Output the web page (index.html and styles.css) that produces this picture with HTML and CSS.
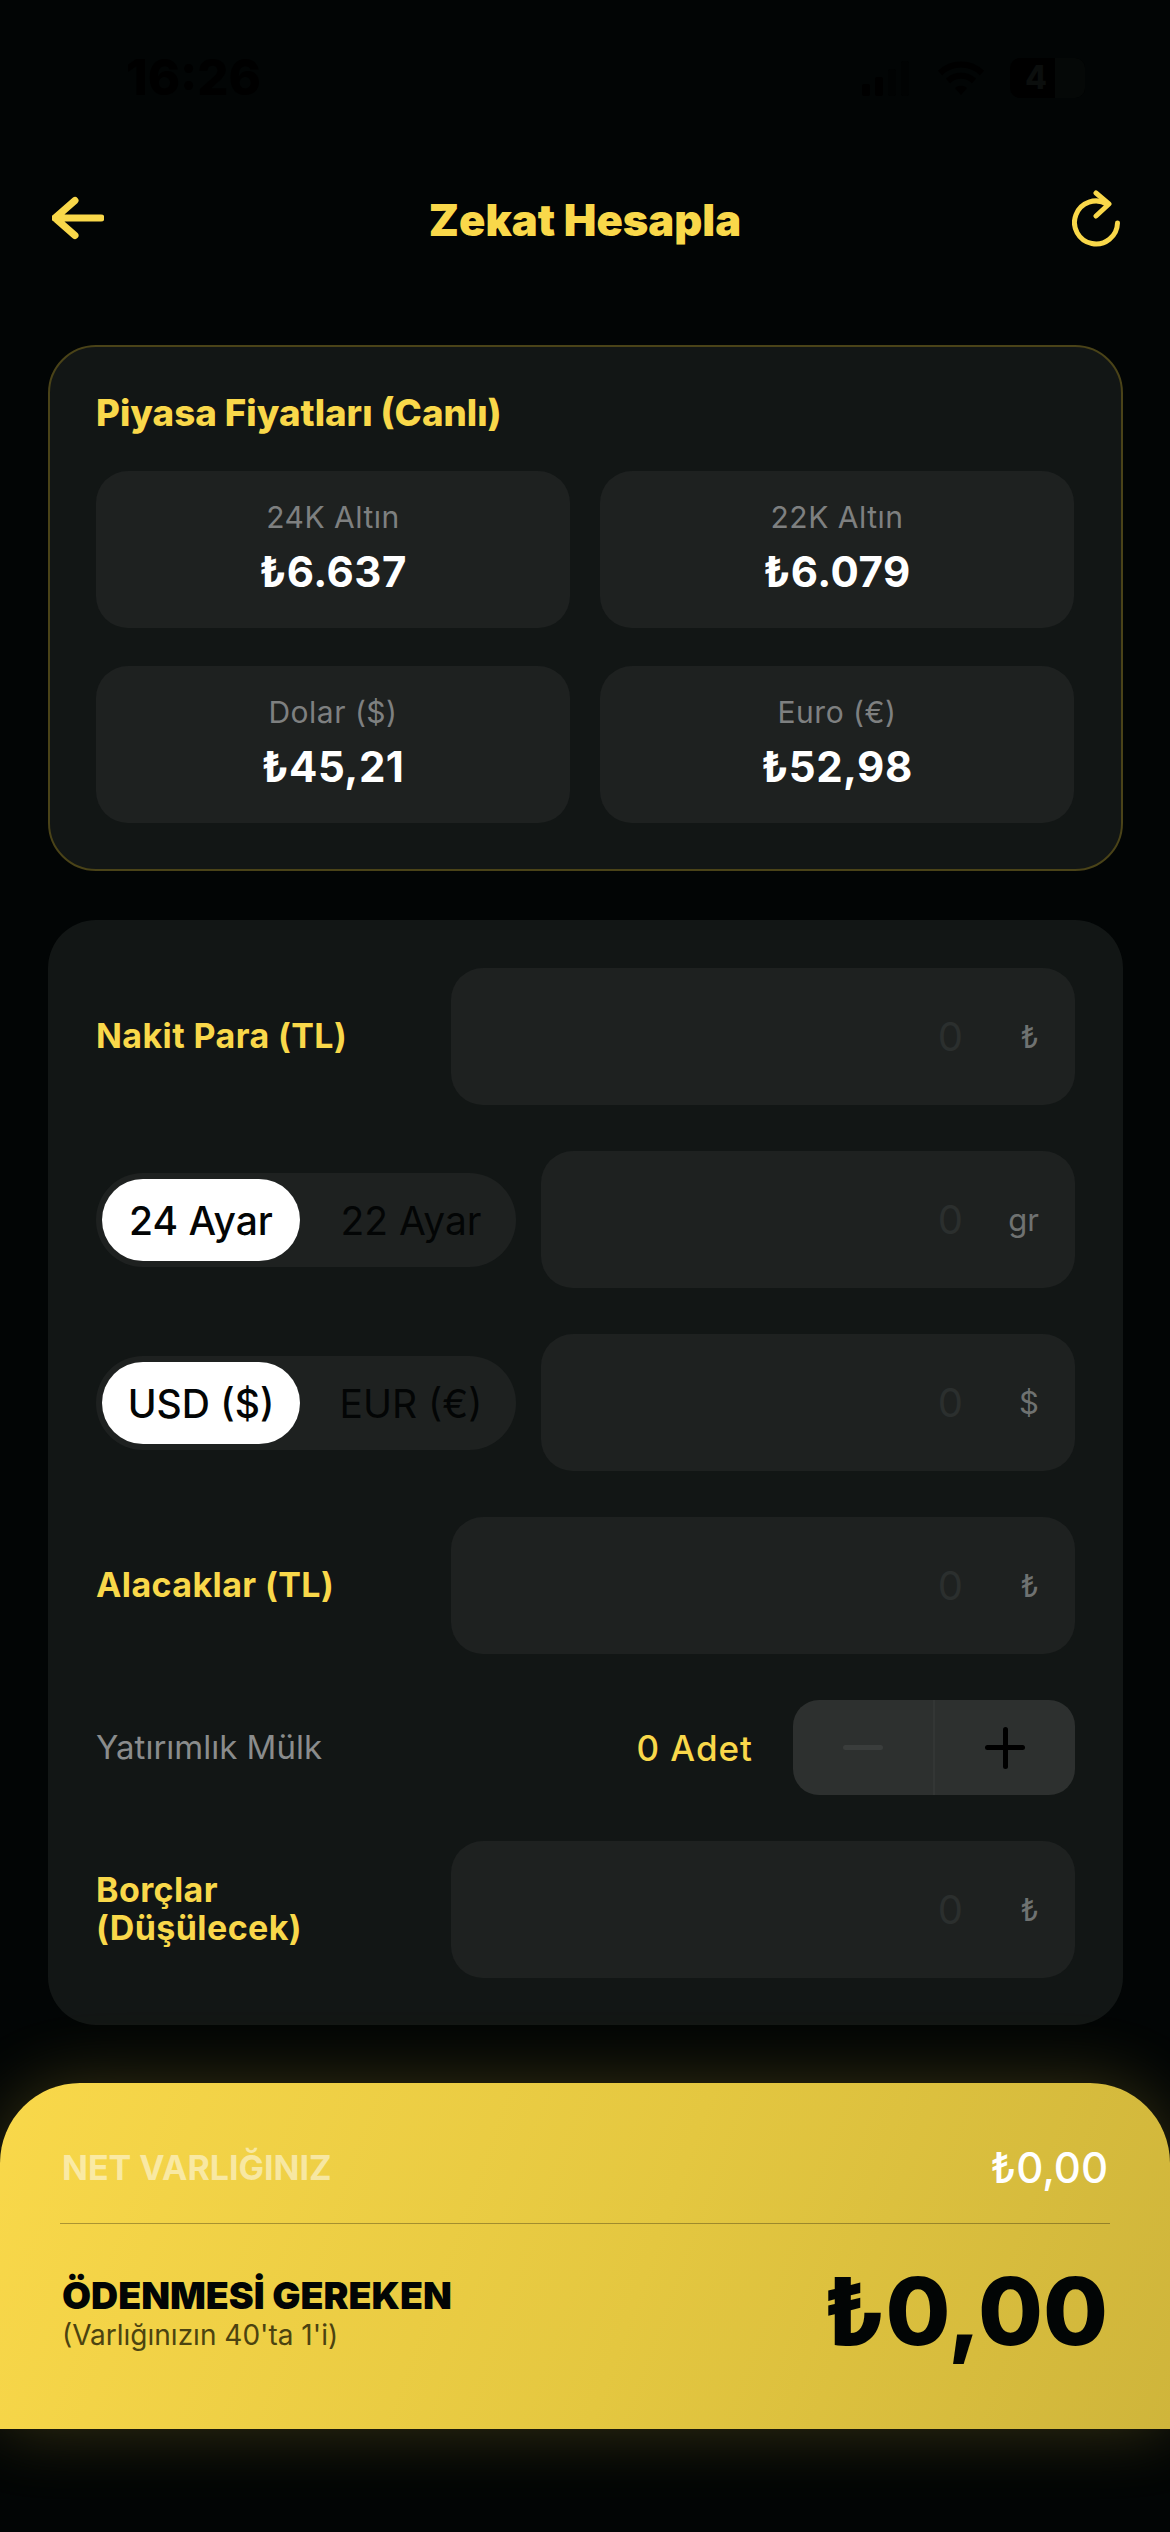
FILE: index.html
```html
<html>
  <head>
    <meta charset="utf-8" />
    <title>Zekat Hesapla</title>
    <link rel="stylesheet" href="styles.css">
  </head>
  <body>
    <div class="status">
      <span class="time">16:26</span>
      <div class="status-icons">
        <svg class="signal" width="48" height="36" viewBox="0 0 48 36">
          <rect x="0" y="24" width="8" height="12" rx="2" />
          <rect x="13" y="17" width="8" height="19" rx="2" />
          <rect x="26" y="9" width="8" height="27" rx="2" class="faint" />
          <rect x="39" y="1" width="8" height="35" rx="2" class="faint" />
        </svg>
        <svg class="wifi" width="48" height="36" viewBox="0 0 48 36">
          <path d="M3 13a30 30 0 0 1 42 0M11 21a19 19 0 0 1 26 0" />
          <path class="wifi-dot" d="M24 35l-6-7a9 9 0 0 1 12 0z" />
        </svg>
        <div class="battery">4<span class="battery-rest"></span></div>
      </div>
    </div>

    <header class="topbar">
      <svg class="back" width="52" height="44" viewBox="0 0 52 44">
        <path d="M23 4.500L3 22l20 17.500M3 22h46" />
      </svg>
      <h1>Zekat Hesapla</h1>
      <svg class="refresh" width="48" height="58" viewBox="0 0 48 58">
        <path d="M45.500 33A21.500 21.500 0 1 1 35 14" />
        <path d="M24 3l13 11-13 12" />
      </svg>
    </header>

    <main class="content">
      <section class="card prices">
        <h2>Piyasa Fiyatları (Canlı)</h2>
        <div class="price-grid">
          <div class="tile">
            <span class="tile-label">24K Altın</span>
            <span class="tile-value">₺6.637</span>
          </div>
          <div class="tile">
            <span class="tile-label">22K Altın</span>
            <span class="tile-value">₺6.079</span>
          </div>
          <div class="tile">
            <span class="tile-label">Dolar ($)</span>
            <span class="tile-value">₺45,21</span>
          </div>
          <div class="tile">
            <span class="tile-label">Euro (€)</span>
            <span class="tile-value">₺52,98</span>
          </div>
        </div>
      </section>

      <section class="card form">
        <div class="row">
          <label class="row-label">Nakit Para (TL)</label>
          <div class="field"><span class="placeholder">0</span><span class="unit">₺</span></div>
        </div>
        <div class="row">
          <div class="toggle">
            <span class="opt active">24 Ayar</span>
            <span class="opt">22 Ayar</span>
          </div>
          <div class="field short"><span class="placeholder">0</span><span class="unit">gr</span></div>
        </div>
        <div class="row">
          <div class="toggle">
            <span class="opt active">USD ($)</span>
            <span class="opt">EUR (€)</span>
          </div>
          <div class="field short"><span class="placeholder">0</span><span class="unit">$</span></div>
        </div>
        <div class="row">
          <label class="row-label">Alacaklar (TL)</label>
          <div class="field"><span class="placeholder">0</span><span class="unit">₺</span></div>
        </div>
        <div class="row property">
          <span class="property-label">Yatırımlık Mülk</span>
          <span class="count">0 Adet</span>
          <div class="stepper">
            <span class="step minus"><i class="bar"></i></span>
            <span class="step plus"><i class="bar"></i><i class="bar upright"></i></span>
          </div>
        </div>
        <div class="row">
          <label class="row-label">Borçlar<br />(Düşülecek)</label>
          <div class="field"><span class="placeholder">0</span><span class="unit">₺</span></div>
        </div>
      </section>
    </main>

    <footer class="summary">
      <div class="summary-top">
        <span class="net-label">NET VARLIĞINIZ</span>
        <span class="net-value">₺0,00</span>
      </div>
      <div class="summary-bottom">
        <div>
          <div class="due-label">ÖDENMESİ GEREKEN</div>
          <div class="due-note">(Varlığınızın 40'ta 1'i)</div>
        </div>
        <span class="due-value">₺0,00</span>
      </div>
    </footer>
  </body>
</html>
```

FILE: styles.css
```css
* {
  padding: 0;
  margin: 0;
  box-sizing: border-box;
}

body {
  width: 1170px;
  height: 2532px;
  overflow: hidden;
  background-color: #020505;
  color: #fff;
  font-family: Inter, "Noto Sans", sans-serif;
}

.status {
  height: 150px;
  padding: 52px 85px 0 126px;
  display: flex;
  justify-content: space-between;
  align-items: flex-start;
}

.time {
  font-size: 49px;
  font-weight: 800;
  line-height: 52px;
  color: #000;
}

.status-icons {
  display: flex;
  align-items: center;
  gap: 27px;
  padding-top: 6px;
}

.signal {
  fill: #000;
}

.signal .faint {
  fill: #010303;
}

.wifi {
  fill: none;
  stroke: #000;
  stroke-width: 6;
  margin-right: -2px;
}

.wifi-dot {
  fill: #000;
  stroke: none;
}

.battery {
  width: 75px;
  height: 40px;
  border-radius: 10px;
  background-color: #000;
  color: #0b0e0d;
  font-size: 32px;
  font-weight: 800;
  line-height: 40px;
  padding-left: 15px;
  position: relative;
}

.battery-rest {
  position: absolute;
  top: 0;
  right: 0;
  width: 30px;
  height: 40px;
  background-color: #050807;
  border-radius: 0 10px 10px 0;
}

.topbar {
  height: 140px;
  padding: 0 50px 0 52px;
  display: flex;
  justify-content: space-between;
  align-items: center;
  position: relative;
}

.topbar h1 {
  font-size: 43.500px;
  font-weight: 900;
  color: #f9d84a;
  position: absolute;
  left: 0;
  right: 0;
  text-align: center;
}

.topbar svg {
  fill: none;
  stroke: #f9d84a;
  stroke-linecap: round;
  stroke-linejoin: round;
}

.back {
  stroke-width: 7;
  margin-top: -4px;
}

.refresh {
  stroke-width: 5;
  margin-top: -2px;
}

.content {
  padding: 55px 47px 0 48px;
  display: flex;
  flex-direction: column;
  gap: 49px;
}

.card {
  background-color: #121615;
  border-radius: 48px;
  padding: 48px;
}

.prices {
  border: 2px solid #4a4318;
  padding: 46px 46px 48px;
  height: 526px;
}

.prices h2 {
  font-size: 36.700px;
  font-weight: 800;
  line-height: 40px;
  color: #f9d84a;
  margin-bottom: 38px;
}

.price-grid {
  display: grid;
  grid-template-columns: 474px 474px;
  gap: 38px 30px;
}

.tile {
  height: 157px;
  background-color: #1e2120;
  border-radius: 32px;
  display: flex;
  flex-direction: column;
  align-items: center;
  justify-content: center;
  gap: 13px;
  padding-bottom: 4px;
}

.tile-label {
  font-size: 30px;
  line-height: 36px;
  letter-spacing: 0.5px;
  color: #7e8080;
}

.tile-value {
  font-size: 42px;
  font-weight: 700;
  line-height: 48px;
  letter-spacing: 0.5px;
}

.form {
  height: 1105px;
  display: flex;
  flex-direction: column;
  gap: 46px;
}

.row {
  display: flex;
  align-items: center;
  justify-content: space-between;
}

.row-label {
  font-size: 34px;
  font-weight: 700;
  line-height: 38px;
  letter-spacing: 0.4px;
  color: #f9d84a;
  margin-top: -2px;
}

.field {
  width: 624px;
  height: 137px;
  background-color: #1e2120;
  border-radius: 32px;
  display: flex;
  align-items: center;
  justify-content: flex-end;
  padding-right: 36px;
  font-size: 40px;
}

.field.short {
  width: 534px;
}

.placeholder {
  color: #2b2f2e;
  margin-right: 40px;
}

.unit {
  color: #6f7271;
  font-size: 31px;
  width: 36px;
  text-align: right;
}

.toggle {
  width: 420px;
  height: 94px;
  border-radius: 47px;
  background-color: #1e2120;
  padding: 6px;
  display: flex;
  align-items: center;
}

.opt {
  width: 198px;
  height: 82px;
  padding-top: 2px;
  border-radius: 41px;
  display: flex;
  align-items: center;
  justify-content: center;
  font-size: 39px;
  color: #030505;
}

.opt + .opt {
  width: 208px;
  padding-left: 14px;
}

.opt.active {
  background-color: #fff;
  font-weight: 500;
}

.property {
  height: 95px;
  justify-content: flex-start;
}

.property-label {
  font-size: 33px;
  color: #8a8c8c;
  margin-top: -2px;
}

.count {
  margin-left: auto;
  margin-right: 40px;
  font-size: 35px;
  font-weight: 500;
  letter-spacing: 1px;
  color: #f9d84a;
}

.stepper {
  width: 282px;
  height: 95px;
  border-radius: 26px;
  background-color: #2d302f;
  display: flex;
}

.step {
  flex: 1;
  display: flex;
  align-items: center;
  justify-content: center;
  position: relative;
}

.minus {
  border-right: 2px solid #333635;
}

.bar {
  position: absolute;
  width: 40px;
  height: 5px;
  border-radius: 3px;
  background-color: #000;
}

.bar.upright {
  width: 5px;
  height: 42px;
}

.minus .bar {
  background-color: #3a3d3c;
}

.summary {
  position: absolute;
  top: 2083px;
  left: 0;
  width: 1170px;
  height: 346px;
  border-radius: 80px 80px 0 0;
  background: linear-gradient(110deg, #f9d84a 0%, #e4c740 55%, #cfb53b 100%);
  box-shadow: 0 0 70px rgba(249, 216, 74, 0.22);
  padding: 0 60px;
}

.summary-top {
  height: 141px;
  padding: 28px 2px 0;
  border-bottom: 1px solid rgba(0, 0, 0, 0.3);
  display: flex;
  justify-content: space-between;
  align-items: center;
}

.net-label {
  font-size: 34px;
  font-weight: 700;
  color: rgba(255, 255, 255, 0.5);
}

.net-value {
  font-size: 42px;
  font-weight: 500;
}

.summary-bottom {
  height: 205px;
  padding: 0 2px;
  display: flex;
  justify-content: space-between;
  align-items: flex-start;
}

.due-label {
  margin-top: 49px;
  font-size: 37.500px;
  font-weight: 900;
  line-height: 46px;
  color: #020505;
}

.due-note {
  font-size: 28px;
  line-height: 32px;
  color: #4c4310;
}

.due-value {
  margin-top: 32px;
  font-size: 94px;
  font-weight: 800;
  line-height: 110px;
  color: #020505;
}
```
